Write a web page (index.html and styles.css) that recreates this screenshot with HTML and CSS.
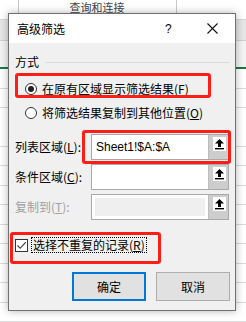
FILE: index.html
```html
<!DOCTYPE html>
<html lang="zh-CN">
<head>
    <meta charset="UTF-8">
    <meta name="viewport" content="width=device-width, initial-scale=1.0">
    <title>高级筛选</title>
    <link rel="stylesheet" href="styles.css">
</head>
<body>
    <div class="sheet">
        <div class="ribbon">
            <span class="ribbon-label">查询和连接</span>
        </div>
        <div class="formula-bar"></div>
        <div class="col-head"></div>
        <div class="grid"></div>
    </div>

    <div class="dialog">
        <div class="titlebar">
            <span class="title">高级筛选</span>
            <span class="help">?</span>
            <span class="close">
                <svg width="11" height="11" viewBox="0 0 11 11"><path d="M0.5 0.5 L10.5 10.5 M10.5 0.5 L0.5 10.5" stroke="#111" stroke-width="1.1" fill="none"/></svg>
            </span>
        </div>

        <div class="content">
            <div class="group-head">
                <span>方式</span>
                <span class="rule"></span>
            </div>
            <div class="option">
                <span class="radio checked"></span>
                <span>在原有区域显示筛选结果(<u>F</u>)</span>
            </div>
            <div class="option">
                <span class="radio"></span>
                <span>将筛选结果复制到其他位置(<u>O</u>)</span>
            </div>

            <div class="field first">
                <span class="field-label">列表区域(<u>L</u>):</span>
                <div class="ref">
                    <span class="ref-input">Sheet1!$A:$A</span>
                    <span class="ref-btn"><span class="ref-icon"><svg width="13" height="14" viewBox="0 0 13 14"><path d="M6.5 2 L11 6.5 L8 6.5 L8 10 L5 10 L5 6.5 L2 6.5 Z" fill="#000"/><rect x="2" y="11" width="9" height="1.4" fill="#000"/></svg></span></span>
                </div>
            </div>
            <div class="field">
                <span class="field-label">条件区域(<u>C</u>):</span>
                <div class="ref">
                    <span class="ref-input"></span>
                    <span class="ref-btn"><span class="ref-icon"><svg width="13" height="14" viewBox="0 0 13 14"><path d="M6.5 2 L11 6.5 L8 6.5 L8 10 L5 10 L5 6.5 L2 6.5 Z" fill="#000"/><rect x="2" y="11" width="9" height="1.4" fill="#000"/></svg></span></span>
                </div>
            </div>
            <div class="field">
                <span class="field-label disabled">复制到(<u>T</u>):</span>
                <div class="ref">
                    <span class="ref-input off"></span>
                    <span class="ref-btn"><span class="ref-icon"><svg width="13" height="14" viewBox="0 0 13 14"><path d="M6.5 2 L11 6.5 L8 6.5 L8 10 L5 10 L5 6.5 L2 6.5 Z" fill="#000"/><rect x="2" y="11" width="9" height="1.4" fill="#000"/></svg></span></span>
                </div>
            </div>

            <div class="check-row">
                <span class="checkbox">
                    <svg width="11" height="11" viewBox="0 0 11 11"><path d="M1.5 5.5 L4.2 8.3 L9.8 2.2" stroke="#333" stroke-width="1.1" fill="none"/></svg>
                </span>
                <span class="focus">选择不重复的记录(<u>R</u>)</span>
            </div>

            <div class="actions">
                <button class="btn primary">确定</button>
                <button class="btn">取消</button>
            </div>
        </div>

        <!-- red annotation boxes drawn over the dialog -->
        <span class="mark mark-1"></span>
        <span class="mark mark-2"></span>
        <span class="mark mark-3"></span>
    </div>
</body>
</html>
```

FILE: styles.css
```css
body {
    margin: 0;
    padding: 0;
    width: 246px;
    height: 322px;
    overflow: hidden;
    position: relative;
    font-family: "Noto Sans CJK SC", "Noto Sans", sans-serif;
    font-size: 12px;
    color: #000;
}
.sheet {
    display: flex;
    flex-direction: column;
    height: 322px;
    background-color: #fff;
}
.ribbon {
    height: 20px;
    border-bottom: 1px solid #d6d6d6;
    background: linear-gradient(#c8c8c8, #c8c8c8) 18px 0 / 1px 20px no-repeat,
                linear-gradient(#c8c8c8, #c8c8c8) 176px 0 / 1px 20px no-repeat,
                #fff;
    display: flex;
    justify-content: center;
    align-items: flex-start;
    padding: 1px 52px 0 0;
    box-sizing: border-box;
}
.ribbon-label {
    font-size: 11px;
    line-height: 12px;
    color: #444;
}
.formula-bar {
    height: 20px;
    background-color: #e6e6e6;
    border-bottom: 1px solid #cfcfcf;
}
.col-head {
    height: 26px;
    background-color: #f3f3f3;
    border-bottom: 2px solid #217346;
}
.grid {
    flex: 1;
    background: repeating-linear-gradient(#fff 0, #fff 18.5px, #d9d9d9 18.5px, #d9d9d9 19.5px);
}
.dialog {
    position: absolute;
    left: 8px;
    top: 13px;
    width: 228px;
    height: 298px;
    box-sizing: border-box;
    border: 1px solid #707070;
    background-color: #f0f0f0;
    box-shadow: 0 0 8px rgba(0, 0, 0, 0.3);
    display: flex;
    flex-direction: column;
}
.titlebar {
    height: 29px;
    background-color: #fff;
    display: flex;
    align-items: center;
    padding-left: 8px;
}
.title {
    flex: 1;
    font-size: 12px;
    line-height: 14px;
}
.help {
    font-family: "Liberation Sans", sans-serif;
    font-size: 12px;
    width: 12px;
    margin-right: 30px;
}
.close {
    display: flex;
    width: 11px;
    margin-right: 17px;
}
.content {
    flex: 1;
    display: flex;
    flex-direction: column;
    padding: 0 5px 0 6px;
}
.group-head {
    display: flex;
    align-items: center;
    height: 16px;
    margin-top: 11px;
    line-height: 16px;
}
.rule {
    flex: 1;
    height: 1px;
    background-color: #dcdcdc;
    margin-left: 6px;
}
.option {
    display: flex;
    align-items: center;
    height: 24px;
    padding-left: 10px;
    line-height: 16px;
}
.group-head + .option {
    margin-top: 7px;
}
.radio {
    width: 12px;
    height: 12px;
    box-sizing: border-box;
    border: 1px solid #333;
    border-radius: 50%;
    background-color: #fff;
    margin-right: 5px;
    display: flex;
    align-items: center;
    justify-content: center;
}
.radio.checked::after {
    content: "";
    width: 6px;
    height: 6px;
    border-radius: 50%;
    background-color: #222;
}
.field {
    display: flex;
    align-items: center;
    height: 26px;
    margin-top: 4px;
}
.field.first {
    margin-top: 9px;
}
.field-label {
    width: 76px;
    line-height: 16px;
}
.field-label.disabled {
    color: #a0a0a0;
}
.ref {
    width: 138px;
    height: 26px;
    box-sizing: border-box;
    border: 1px solid #a9a9a9;
    display: flex;
}
.ref-input {
    flex: 1;
    background-color: #fff;
    font-family: "Liberation Sans", sans-serif;
    font-size: 12px;
    line-height: 24px;
    padding-left: 4px;
}
.ref-input.off {
    background-color: #efefef;
    box-shadow: inset 0 0 0 3px #fff;
}
.ref-btn {
    width: 20px;
    background-color: #cdcdcd;
    border-left: 1px solid #bdbdbd;
    display: flex;
    padding: 2px 0 0 4px;
    box-sizing: border-box;
}
.ref-icon {
    width: 13px;
    height: 14px;
    background-color: #fff;
    display: flex;
}
.check-row {
    display: flex;
    align-items: center;
    height: 16px;
    margin-top: 17px;
}
.checkbox {
    width: 13px;
    height: 13px;
    box-sizing: border-box;
    border: 1px solid #333;
    background-color: #fff;
    display: flex;
    margin-right: 3px;
}
.focus {
    border: 1px dotted #000;
    line-height: 14px;
    padding: 0 1px;
}
.actions {
    display: flex;
    justify-content: flex-end;
    gap: 10px;
    margin-top: 19px;
}
.btn {
    width: 74px;
    height: 29px;
    box-sizing: border-box;
    border: 1px solid #adadad;
    background-color: #e1e1e1;
    font-family: "Noto Sans CJK SC", sans-serif;
    font-size: 12px;
    color: #000;
    padding: 0;
}
.btn.primary {
    border: 2px solid #0078d7;
}
.mark {
    position: absolute;
    border: 3px solid #ff1d17;
    border-radius: 3px;
    box-sizing: border-box;
}
.mark-1 {
    left: 6px;
    top: 59px;
    width: 196px;
    height: 25px;
}
.mark-2 {
    left: 73px;
    top: 116px;
    width: 149px;
    height: 34px;
}
.mark-3 {
    left: 1px;
    top: 218px;
    width: 151px;
    height: 32px;
}
```
